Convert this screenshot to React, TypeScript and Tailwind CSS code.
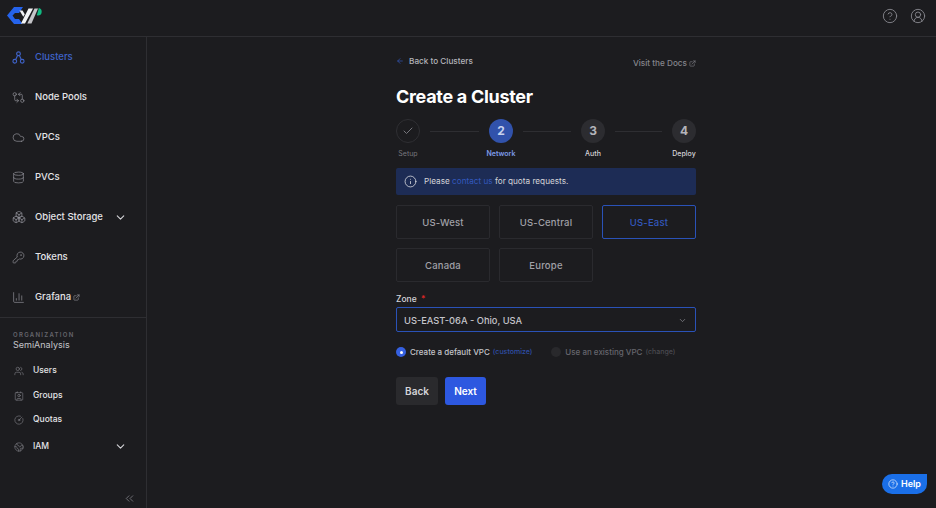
import React from 'react'
import {
  ArrowLeft,
  Boxes,
  Check,
  ChartColumn,
  ChevronDown,
  ChevronsLeft,
  CircleGauge,
  CircleHelp,
  CircleUserRound,
  Cloud,
  Contact,
  Database,
  Earth,
  ExternalLink,
  GitCompareArrows,
  Info,
  KeyRound,
  Users,
} from 'lucide-react'

function ClusterIcon() {
  return (
    <svg width="13" height="13" viewBox="0 0 14 14" fill="none" stroke="currentColor" strokeWidth="1.2">
      <circle cx="7" cy="3" r="2" />
      <circle cx="3" cy="11" r="2" />
      <circle cx="11" cy="11" r="2" />
      <path d="M6 4.8 4 9.2M8 4.8l2 4.4" />
    </svg>
  )
}

function Logo() {
  return (
    <svg width="40" height="20" viewBox="6 5 40 20">
      <path d="M14 7h9l-4 6h-4l-2.5 2.5L15 19h4l3.5 5H14l-7-8.5z" fill="#2563eb" />
      <path d="M19.5 10.5h3l2.3 3.7-1.5 2.5z" fill="#f3f4f6" />
      <path d="M28.5 8.5H33L25 23.5h-4z" fill="#f3f4f6" />
      <path d="M34.5 8.5H38L31.5 23.5h-4.2z" fill="#c4c4c8" />
      <path d="M38 8a3.7 3.7 0 1 1 0 7.4l-1.2-.2 2-6.8z" fill="#10b981" />
    </svg>
  )
}

function NavRow({ icon, label, active, chevron, external }: { icon: React.ReactNode; label: string; active?: boolean; chevron?: boolean; external?: boolean }) {
  return (
    <div className={`h-10 pt-[2px] flex items-center pl-3 pr-[19px] text-[9.5px] font-medium ${active ? 'text-[#3f63c9]' : 'text-[#e4e4e7]'}`}>
      <span className={`w-[23px] shrink-0 ${active ? 'text-[#3f63c9]' : 'text-[#8f8f96]'}`}>{icon}</span>
      <span>{label}</span>
      {external && <ExternalLink size={7} className="ml-[2px] text-[#9a9aa0]" />}
      {chevron && <ChevronDown size={13} className="ml-auto text-[#d4d4d8]" />}
    </div>
  )
}

function OrgRow({ icon, label, chevron, className }: { icon: React.ReactNode; label: string; chevron?: boolean; className: string }) {
  return (
    <div className={`flex items-center pl-[14px] pr-[19px] text-[8.5px] font-medium text-[#e4e4e7] ${className}`}>
      <span className="w-[19px] shrink-0 text-[#85858c]">{icon}</span>
      <span>{label}</span>
      {chevron && <ChevronDown size={13} className="ml-auto text-[#d4d4d8]" />}
    </div>
  )
}

function Step({ label, num, state }: { label: string; num?: string; state: 'done' | 'active' | 'todo' }) {
  return (
    <div className="w-6 flex flex-col items-center shrink-0">
      <div
        className={`w-6 h-6 rounded-full flex items-center justify-center text-[12px] font-bold ${
          state === 'active' ? 'bg-[#3152ab] text-[#c7d2ee]' : state === 'done' ? 'bg-[#1c1c1f] border border-[#2f2f33] text-[#77777d]' : 'bg-[#2c2c30] text-[#b4b4ba]'
        }`}
      >
        {state === 'done' ? <Check size={12} /> : num}
      </div>
      <div
        className={`mt-[6px] text-[7px] leading-[9px] whitespace-nowrap ${
          state === 'active' ? 'text-[#7c9be8] font-semibold' : state === 'done' ? 'text-[#77777d]' : 'text-[#d4d4d8] font-medium'
        }`}
      >
        {label}
      </div>
    </div>
  )
}

function Line({ className }: { className: string }) {
  return <div className={`mx-[10px] mt-3 h-px bg-[#2e2e32] ${className}`} />
}

function Region({ label, active }: { label: string; active?: boolean }) {
  return (
    <div
      className={`h-[34px] pt-[2px] rounded-[2px] flex items-center justify-center text-[9.5px] font-medium tracking-[0.2px] ${
        active ? 'border-[1.5px] border-[#2a52b8] text-[#3358bd]' : 'border border-[#2a2a2e] text-[#a1a1a8]'
      }`}
    >
      {label}
    </div>
  )
}

export default function App() {
  return (
    <div className="w-[936px] h-[508px] bg-[#1c1c1f] flex flex-col overflow-hidden font-['Inter',sans-serif] relative">
      <header className="h-[37px] shrink-0 border-b border-[#2e2e32] flex items-center justify-between pl-[6px] pr-[10px]">
        <div className="-mt-[6px]">
          <Logo />
        </div>
        <div className="flex items-center gap-[12px] -mt-[5px] text-[#85858c]">
          <CircleHelp size={16} strokeWidth={1.4} />
          <CircleUserRound size={16} strokeWidth={1.4} />
        </div>
      </header>

      <div className="flex flex-1 min-h-0">
        <aside className="w-[147px] shrink-0 border-r border-[#2e2e32] flex flex-col">
          <div className="-mt-px pb-px">
            <NavRow icon={<ClusterIcon />} label="Clusters" active />
            <NavRow icon={<GitCompareArrows size={13} strokeWidth={1.3} />} label="Node Pools" />
            <NavRow icon={<Cloud size={13} strokeWidth={1.3} />} label="VPCs" />
            <NavRow icon={<Database size={13} strokeWidth={1.3} />} label="PVCs" />
            <NavRow icon={<Boxes size={14} strokeWidth={1.3} />} label="Object Storage" chevron />
            <NavRow icon={<KeyRound size={13} strokeWidth={1.3} />} label="Tokens" />
            <NavRow icon={<ChartColumn size={13} strokeWidth={1.3} />} label="Grafana" external />
          </div>
          <div className="border-t border-[#2e2e32] pt-[13px] pl-[13px]">
            <div className="text-[6px] leading-[8px] font-semibold tracking-[1.3px] text-[#66666d]">ORGANIZATION</div>
            <div className="text-[9px] leading-[12px] text-[#c4c4ca]">SemiAnalysis</div>
          </div>
          <div className="mt-[7px]">
            <OrgRow className="h-[25px]" icon={<Users size={10} strokeWidth={1.4} />} label="Users" />
            <OrgRow className="h-[25px]" icon={<Contact size={10} strokeWidth={1.4} />} label="Groups" />
            <OrgRow className="h-[23px]" icon={<CircleGauge size={10} strokeWidth={1.4} />} label="Quotas" />
            <OrgRow className="h-[31px]" icon={<Earth size={10} strokeWidth={1.4} />} label="IAM" chevron />
          </div>
          <div className="mt-auto flex justify-end pr-[10px] pb-[3px] text-[#85858c]">
            <ChevronsLeft size={13} strokeWidth={1.4} />
          </div>
        </aside>

        <main className="flex-1 flex justify-center pl-[9px]">
          <div className="w-[300px] pt-[17px]">
            <div className="flex items-start justify-between">
              <div className="flex items-center text-[8.2px] leading-[14px] font-medium text-[#b4b4ba]">
                <ArrowLeft size={8} className="text-[#3358bd] mr-[5px]" />
                Back to Clusters
              </div>
              <div className="flex items-center mt-[2px] text-[8.2px] leading-[14px] font-medium text-[#85858c]">
                Visit the Docs
                <ExternalLink size={7} className="ml-[2px]" />
              </div>
            </div>
            <h1 className="mt-[13px] text-[18px] leading-[28px] font-bold text-white tracking-[-0.3px]">Create a Cluster</h1>
            <div className="mt-[8px] flex items-start">
              <Step label="Setup" state="done" />
              <Line className="w-[49px]" />
              <Step label="Network" num="2" state="active" />
              <Line className="w-[48px]" />
              <Step label="Auth" num="3" state="todo" />
              <Line className="w-[47px]" />
              <Step label="Deploy" num="4" state="todo" />
            </div>
            <div className="mt-[10px] h-[27px] rounded-[2px] bg-[#1d2c55] flex items-center pl-[8px] text-[8.2px] text-[#d4d4d8]">
              <Info size={13} strokeWidth={1.4} className="text-[#e4e4e7] mr-[7px]" />
              Please&nbsp;<span className="text-[#3358bd]">contact us</span>&nbsp;for quota requests.
            </div>
            <div className="mt-[10px] grid grid-cols-3 gap-[9px]">
              <Region label="US-West" />
              <Region label="US-Central" />
              <Region label="US-East" active />
              <Region label="Canada" />
              <Region label="Europe" />
            </div>
            <div className="mt-[12px] text-[8.5px] leading-[10px] font-medium text-[#d4d4d8]">
              Zone <span className="text-[#dc2626] ml-[2px]">*</span>
            </div>
            <div className="mt-[3px] h-[25px] pt-[2px] rounded-[2px] border-[1.5px] border-[#2a52b8] flex items-center justify-between pl-[7px] pr-[8px] text-[9.3px] font-medium text-[#c4c4ca]">
              US-EAST-06A - Ohio, USA
              <ChevronDown size={9} className="text-[#85858c]" />
            </div>
            <div className="mt-[15px] flex items-center text-[8px] leading-[10px] font-medium">
              <span className="w-[10px] h-[10px] rounded-full bg-[#3560e0] flex items-center justify-center mr-[4px]">
                <span className="w-[3px] h-[3px] rounded-full bg-white" />
              </span>
              <span className="text-[#c4c4ca]">Create a default VPC</span>
              <span className="ml-[3px] text-[7px] text-[#2f4fa8]">(customize)</span>
              <span className="ml-[19px] w-[10px] h-[10px] rounded-full bg-[#29292c] mr-[4px]" />
              <span className="text-[#66666d]">Use an existing VPC</span>
              <span className="ml-[3px] text-[7px] text-[#4a4a50]">(change)</span>
            </div>
            <div className="mt-[20px] flex gap-[7px]">
              <div className="w-[42px] h-[28px] rounded-[3px] bg-[#2a2a2d] flex items-center justify-center text-[10px] font-semibold text-[#d4d4d8]">Back</div>
              <div className="w-[41px] h-[28px] rounded-[3px] bg-[#2d58e0] flex items-center justify-center text-[10px] font-semibold text-white">Next</div>
            </div>
          </div>
        </main>
      </div>

      <div className="absolute left-[882px] top-[474px] w-[45px] h-[20px] rounded-full rounded-tr-[3px] bg-[#1a6fe8] flex items-center justify-center gap-[3px] text-[9px] font-semibold text-white">
        <CircleHelp size={10} strokeWidth={1.5} />
        Help
      </div>
    </div>
  )
}
